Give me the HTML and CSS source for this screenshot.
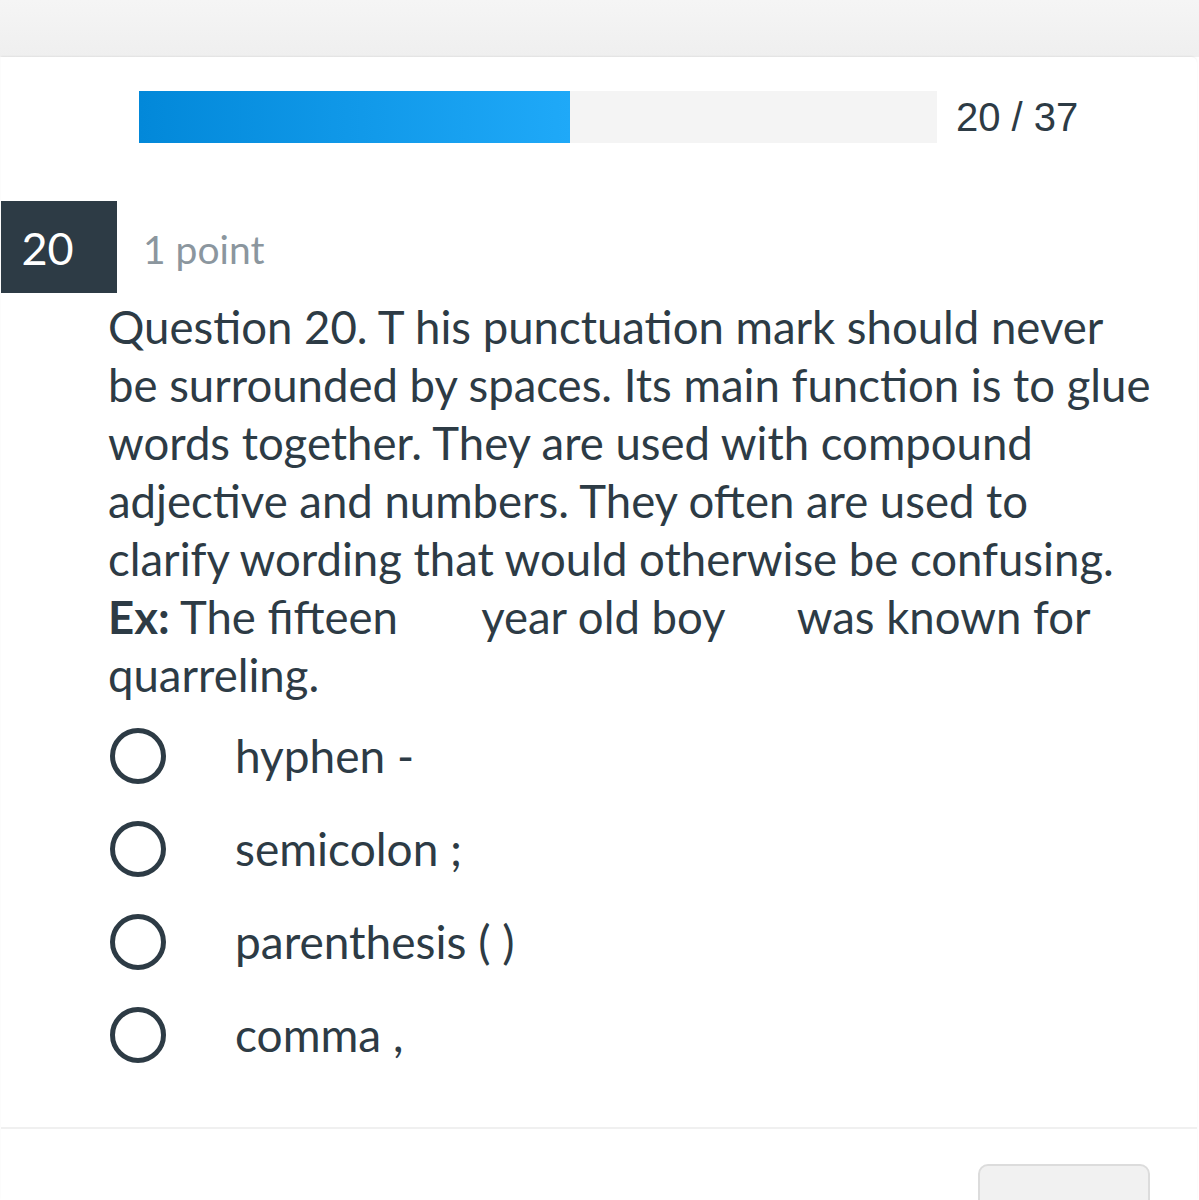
FILE: index.html
```html
<!DOCTYPE html>
<html>
<head>
<meta charset="utf-8">
<link rel="stylesheet" href="styles.css">
</head>
<body>
<div class="topbar"></div>
<div class="card">
  <div class="progress-row">
    <div class="track"><div class="fill" style="width:54.05%"></div></div>
    <div class="count">20 / 37</div>
  </div>
  <div class="q-header">
    <div class="q-num">20</div>
    <div class="q-points">1 point</div>
  </div>
  <div class="q-text">Question 20. T his punctuation mark should never<br>be surrounded by spaces. Its main function is to glue<br>words together. They are used with compound<br>adjective and numbers. They often are used to<br>clarify wording that would otherwise be confusing.<br><b>Ex:</b> The fifteen <span class="blank1"></span> year old boy <span class="blank2"></span> was known for<br>quarreling.</div>
  <ul class="options">
    <li class="option"><span class="radio"></span><span class="label">hyphen -</span></li>
    <li class="option"><span class="radio"></span><span class="label">semicolon ;</span></li>
    <li class="option"><span class="radio"></span><span class="label">parenthesis ( )</span></li>
    <li class="option"><span class="radio"></span><span class="label">comma ,</span></li>
  </ul>
  <div class="divider"></div>
  <div class="footer"><div class="btn"></div></div>
</div>
</body>
</html>
```
FILE: styles.css
```css
html, body {
  margin: 0;
  padding: 0;
  background: #ffffff;
  font-family: Lato, "Noto Sans", sans-serif;
  color: #2d3b45;
}
.topbar {
  height: 57px;
  background: linear-gradient(#f5f5f5, #efefef);
}
.card {
  background: #ffffff;
  margin: 0 2px 0 1px;
  border-radius: 0 6px 0 0;
  box-shadow: 0 -1px 2px rgba(0,0,0,0.06);
  overflow: hidden;
  height: 1143px;
}
.progress-row {
  display: flex;
  align-items: center;
  padding: 34px 0 0 138px;
}
.track {
  width: 798px;
  height: 52px;
  background: #f4f4f4;
}
.fill {
  height: 100%;
  background: linear-gradient(90deg, #0288d9, #1fa9f8);
}
.count {
  margin-left: 19px;
  font-family: "Liberation Sans", Arial, sans-serif;
  font-size: 40px;
  color: #2d3b45;
  line-height: 52px;
}
.q-header {
  display: flex;
  align-items: center;
  margin-top: 58px;
  margin-left: -1px;
}
.q-num {
  width: 117px;
  height: 92px;
  background: #2d3b45;
  color: #ffffff;
  font-size: 45px;
  display: flex;
  align-items: center;
  justify-content: center;
  box-sizing: border-box;
  padding-right: 22px;
  padding-top: 2px;
}
.q-points {
  margin-left: 26px;
  font-size: 39px;
  color: #8b969e;
  padding-top: 3px;
}
.q-text {
  padding-left: 107px;
  padding-top: 5px;
  font-size: 45.5px;
  line-height: 58px;
  white-space: nowrap;
}
.q-text b {
  font-weight: 700;
}
.blank1, .blank2 {
  display: inline-block;
  width: 61px;
}
.blank2 {
  width: 50px;
}
.options {
  list-style: none;
  margin: 5px 0 0 0;
  padding: 0 0 0 109px;
}
.option {
  display: flex;
  align-items: center;
  height: 93px;
}
.radio {
  width: 56px;
  height: 56px;
  box-sizing: border-box;
  border: 5px solid #2d3b45;
  border-radius: 50%;
  flex: none;
}
.label {
  margin-left: 69px;
  font-size: 46px;
}
.divider {
  margin-top: 46px;
  height: 2px;
  background: #f0f0f0;
}
.footer {
  display: flex;
  justify-content: flex-end;
  padding: 35px 47px 0 0;
}
.btn {
  width: 172px;
  height: 60px;
  box-sizing: border-box;
  border: 2px solid #dcdcdc;
  border-radius: 10px;
  background: #f1f1f1;
}
```
